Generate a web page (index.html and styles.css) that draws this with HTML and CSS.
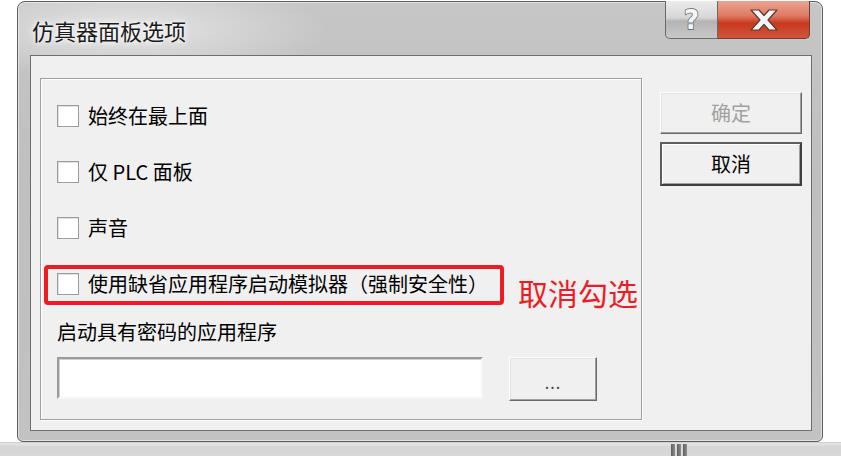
FILE: index.html
```html
<!DOCTYPE html>
<html lang="zh-CN">
<head>
    <meta charset="UTF-8">
    <title>仿真器面板选项</title>
    <link rel="stylesheet" href="styles.css">
</head>
<body>
    <div class="desktop">
        <div class="window">
            <div class="titlebar">
                <div class="title">仿真器面板选项</div>
                <div class="caption-btns">
                    <div class="cap-help"><span>?</span></div>
                    <div class="cap-close">
                        <svg width="32" height="22" viewBox="0 0 32 22">
                            <polygon points="3,1 11,1 16,6.5 21,1 29,1 20,11 29,21 21,21 16,15.5 11,21 3,21 12,11"
                                     fill="#f4f4f4" stroke="#5a3a36" stroke-width="1.2" stroke-linejoin="round"/>
                        </svg>
                    </div>
                </div>
            </div>

            <div class="client">
                <div class="groupbox">
                    <div class="row">
                        <span class="checkbox"></span>
                        <span class="label">始终在最上面</span>
                    </div>
                    <div class="row">
                        <span class="checkbox"></span>
                        <span class="label">仅 PLC 面板</span>
                    </div>
                    <div class="row">
                        <span class="checkbox"></span>
                        <span class="label">声音</span>
                    </div>
                    <div class="row">
                        <span class="checkbox"></span>
                        <span class="label">使用缺省应用程序启动模拟器（强制安全性）</span>
                    </div>

                    <div class="field-label">启动具有密码的应用程序</div>
                    <div class="field-row">
                        <div class="textbox"></div>
                        <div class="btn browse">...</div>
                    </div>

                    <!-- 标注 -->
                    <div class="mark-box"></div>
                    <div class="mark-text">取消勾选</div>
                </div>

                <div class="side-btns">
                    <div class="btn disabled">确定</div>
                    <div class="btn default">取消</div>
                </div>
            </div>
        </div>
        <div class="taskbar">
            <div class="grip">
                <span></span><span></span><span></span>
            </div>
        </div>
    </div>
</body>
</html>
```

FILE: styles.css
```css
* {
    margin: 0;
    padding: 0;
    box-sizing: border-box;
}

body {
    width: 841px;
    height: 456px;
    overflow: hidden;
    background: #ffffff;
    font-family: "Noto Sans CJK SC", "Noto Sans", sans-serif;
    color: #000;
}

.desktop {
    display: flex;
    flex-direction: column;
    height: 456px;
}

.window {
    margin: 1px 0 0 17px;
    width: 806px;
    height: 442px;
    border: 1px solid #5c5c5c;
    border-radius: 8px 8px 6px 6px;
    background:
        radial-gradient(ellipse 200px 50px at 110px 28px, rgba(255, 255, 255, 0.55), rgba(255, 255, 255, 0) 100%),
        linear-gradient(180deg, #c6c6c6 0%, #bfbfbf 40%, #c2c2c2 100%);
    display: flex;
    flex-direction: column;
    box-shadow: inset 0 0 0 1px rgba(255, 255, 255, 0.5);
}

.titlebar {
    height: 53px;
    display: flex;
    align-items: flex-start;
}

.title {
    flex: 1;
    padding: 14px 0 0 14px;
    font-size: 22px;
    line-height: 28px;
    color: #1b1b1b;
    text-shadow: 0 0 8px #ffffff, 0 0 4px #ffffff;
}

.caption-btns {
    display: flex;
    margin: -1px 12px 0 0;
}

.cap-help {
    width: 53px;
    height: 38px;
    border: 1px solid #6a6a6a;
    border-top: none;
    border-radius: 0 0 0 5px;
    background: linear-gradient(180deg, #ececec 0%, #d6d6d6 45%, #b4b4b4 55%, #c8c8c8 100%);
    display: flex;
    align-items: center;
    justify-content: center;
}

.cap-help span {
    font-family: "DejaVu Sans", sans-serif;
    font-weight: bold;
    font-size: 26px;
    line-height: 26px;
    color: #f6f6f6;
    -webkit-text-stroke: 1.4px #5f5f5f;
    paint-order: stroke fill;
}

.cap-close {
    width: 92px;
    height: 38px;
    border: 1px solid #6a4038;
    border-left: none;
    border-top: none;
    border-radius: 0 0 5px 0;
    background: linear-gradient(180deg, #eca493 0%, #e07a62 40%, #c8391e 60%, #d2553a 100%);
    display: flex;
    align-items: center;
    justify-content: center;
}

.client {
    margin: 0 10px 10px 12px;
    flex: 1;
    border: 1px solid #6e6e6e;
    background: #f0f0f0;
    display: grid;
    grid-template-columns: 602px 142px;
    column-gap: 18px;
    align-items: start;
    padding: 22px 0 0 9px;
}

.groupbox {
    position: relative;
    height: 342px;
    border: 1px solid #a0a0a0;
    box-shadow: 1px 1px 0 #ffffff, inset 1px 1px 0 #ffffff;
    padding: 26px 0 0 16px;
    display: flex;
    flex-direction: column;
}

.row {
    display: flex;
    align-items: center;
    gap: 9px;
    height: 22px;
    margin-bottom: 34px;
}

.checkbox {
    width: 22px;
    height: 22px;
    border: 1px solid #9c9c9c;
    background: #ffffff;
    box-shadow: inset 1px 1px 0 #e2e2e2;
}

.label,
.field-label {
    font-size: 20px;
    line-height: 24px;
    white-space: nowrap;
}

.field-label {
    margin-top: -9px;
}

.field-row {
    display: flex;
    align-items: flex-start;
    gap: 26px;
    margin-top: 13px;
}

.textbox {
    width: 426px;
    height: 42px;
    background: #ffffff;
    border: 2px solid;
    border-color: #9a9a9a #f6f6f6 #f6f6f6 #9a9a9a;
    box-shadow: inset 1px 1px 0 #d0d0d0;
}

.btn {
    display: flex;
    align-items: center;
    justify-content: center;
    background: #f0f0f0;
    border: 1px solid;
    border-color: #ffffff #696969 #696969 #ffffff;
    box-shadow: inset -1px -1px 0 #a0a0a0, inset 1px 1px 0 #e3e3e3;
    font-size: 20px;
    line-height: 24px;
}

.browse {
    width: 88px;
    height: 44px;
    font-size: 16px;
    letter-spacing: 1px;
    padding-top: 6px;
    color: #444;
}

.side-btns {
    display: flex;
    flex-direction: column;
    gap: 8px;
    margin-top: 14px;
}

.side-btns .btn {
    height: 42px;
}

.btn.disabled {
    color: #a2a2a2;
}

.btn.default {
    height: 44px;
    border: 2px solid;
    border-color: #5e5e5e #3e3e3e #3e3e3e #5e5e5e;
    box-shadow: inset 1px 1px 0 #ffffff, inset -1px -1px 0 #a0a0a0;
}

.mark-box {
    position: absolute;
    left: 3px;
    top: 186px;
    width: 460px;
    height: 40px;
    border: 4px solid #ed1c24;
    border-radius: 4px;
}

.mark-text {
    position: absolute;
    left: 477px;
    top: 196px;
    font-size: 30px;
    line-height: 34px;
    color: #ed1c24;
    white-space: nowrap;
}

.taskbar {
    flex: 1;
    background: linear-gradient(180deg, #e6e6e6 0%, #d6d6d6 30%, #d8d8d8 100%);
    border-top: 1px solid #cfcfcf;
}

.grip {
    display: flex;
    gap: 2px;
    margin: 1px 0 0 671px;
}

.grip span {
    width: 4px;
    height: 12px;
    background: linear-gradient(90deg, #5e5e5e, #8e8e8e);
}
```
